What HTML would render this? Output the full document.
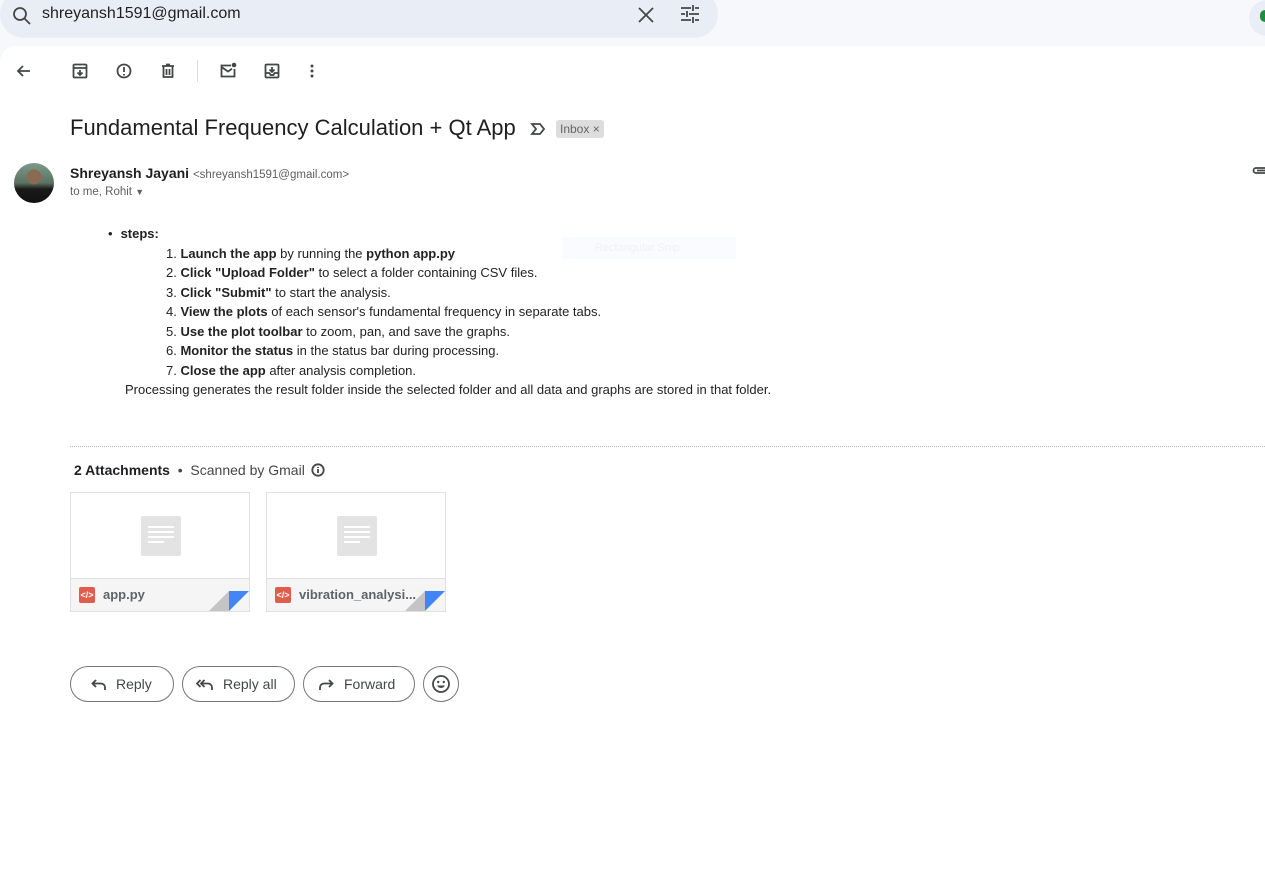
<!DOCTYPE html>
<html><head><meta charset="utf-8"><style>
*{margin:0;padding:0;box-sizing:border-box}
body{width:1265px;height:884px;background:#f6f8fc;font-family:"Liberation Sans",Arial,sans-serif;position:relative;overflow:hidden;color:#202124}
.abs{position:absolute}
.search{left:0;top:-10px;width:718px;height:48px;background:#e9eef6;border-radius:24px}
.panel{left:0;top:46px;width:1265px;height:838px;background:#fff;border-radius:16px 0 0 0}
svg{position:absolute}
.ic{stroke:#444746;fill:none;stroke-width:1.8}
.body{font-size:13px;color:#222;line-height:19.5px}
b{font-weight:bold}
.att{width:180px;height:120px;border:1px solid #e0e0e0;background:#fff}
.att .bot{position:absolute;left:0;top:85px;width:178px;height:33px;background:#f5f5f5;border-top:1px solid #e0e0e0}
.btn{height:36px;border:1px solid #747775;border-radius:18px;font-size:14px;color:#444746;top:666px}
</style></head><body>
<div class="abs search"></div>
<svg style="left:10px;top:4px" width="24" height="24" viewBox="0 0 24 24"><circle cx="10" cy="10" r="6" class="ic" stroke-width="2"/><path d="M14.5 14.5L20 20" class="ic" stroke-width="2.2"/></svg>
<div class="abs" style="left:42px;top:5px;font-size:16px;color:#1f1f1f">shreyansh1591@gmail.com</div>
<svg style="left:636px;top:5px" width="20" height="20" viewBox="0 0 20 20"><path d="M3 3L17 17M17 3L3 17" class="ic" stroke-width="2"/></svg>
<svg style="left:680px;top:4px" width="20" height="20" viewBox="0 0 20 20"><path d="M1 4h10M15 4h4M13 1v6M1 10h4M9 10h10M7 7v6M1 16h10M15 16h4M13 13v6" class="ic" stroke-width="1.8"/></svg>
<div class="abs" style="left:1249px;top:0;width:40px;height:36px;border-radius:18px;background:#e9eef6"></div>
<div class="abs" style="left:1260px;top:10px;width:10px;height:12px;border-radius:6px;background:#1e8e3e"></div>
<div class="abs panel"></div>
<svg style="left:15px;top:62px" width="18" height="18" viewBox="0 0 18 18"><path d="M15 9H3M8 4L3 9l5 5" class="ic" stroke-width="1.6"/></svg>
<svg style="left:71px;top:62px" width="18" height="18" viewBox="0 0 18 18"><rect x="2.5" y="2.5" width="13" height="13" rx="1" class="ic" stroke-width="1.6"/><path d="M2.5 6h13M9 8v5M6.5 10.5L9 13l2.5-2.5" class="ic" stroke-width="1.6"/></svg>
<svg style="left:115px;top:62px" width="18" height="18" viewBox="0 0 18 18"><circle cx="9" cy="9" r="6.5" class="ic" stroke-width="1.6"/><path d="M9 5v5M9 12v1.5" class="ic" stroke-width="1.6"/></svg>
<svg style="left:159px;top:62px" width="18" height="18" viewBox="0 0 18 18"><path d="M3 4h12M7 2.5h4M4.5 4v11h9V4M7.5 7v6M10.5 7v6" class="ic" stroke-width="1.6"/></svg>
<div class="abs" style="left:197px;top:60px;width:1px;height:22px;background:#dadce0"></div>
<svg style="left:219px;top:62px" width="18" height="18" viewBox="0 0 18 18"><path d="M12 3.5H2.5v11h13V7" class="ic" stroke-width="1.6"/><path d="M2.5 5l6.5 4.5 4-2.7" class="ic" stroke-width="1.6"/><circle cx="15" cy="3" r="2.3" fill="#444746"/></svg>
<svg style="left:263px;top:62px" width="18" height="18" viewBox="0 0 18 18"><rect x="2.5" y="2.5" width="13" height="13" rx="1" class="ic" stroke-width="1.6"/><path d="M2.5 11h4l1 2h3l1-2h4M9 5v5M6.5 7.5L9 10l2.5-2.5" class="ic" stroke-width="1.6"/></svg>
<svg style="left:303px;top:62px" width="18" height="18" viewBox="0 0 18 18"><circle cx="9" cy="4" r="1.5" fill="#444746"/><circle cx="9" cy="9" r="1.5" fill="#444746"/><circle cx="9" cy="14" r="1.5" fill="#444746"/></svg>
<div class="abs" style="left:70px;top:115px;font-size:22px;color:#1f1f1f">Fundamental Frequency Calculation + Qt App</div>
<svg style="left:530px;top:121px" width="16" height="16" viewBox="0 0 16 16"><path d="M2 3h8l4 5-4 5H2l4-5z" class="ic" stroke-width="1.3"/></svg>
<div class="abs" style="left:556px;top:120px;height:18px;padding:0 4px;background:#ddd;border-radius:3px;font-size:12px;line-height:18px;color:#666">Inbox ×</div>
<div class="abs" style="left:14px;top:163px;width:40px;height:40px;border-radius:50%;background:radial-gradient(circle at 50% 35%,#8a6a50 0 22%,transparent 23%),linear-gradient(#7f9a8a 0,#5a7262 50%,#1a1a1a 65%,#111 100%)"></div>
<div class="abs" style="left:70px;top:165px;font-size:14px;color:#1f1f1f;font-weight:bold">Shreyansh Jayani <span style="font-weight:normal;font-size:11.5px;color:#5e5e5e">&lt;shreyansh1591@gmail.com&gt;</span></div>
<div class="abs" style="left:70px;top:186px;font-size:11.5px;color:#5e5e5e">to me, Rohit <span style="font-size:9px">▼</span></div>
<svg style="left:1252px;top:165px" width="13" height="12" viewBox="0 0 13 12"><path d="M13 3H4a2.5 2.5 0 000 5h9M13 5.5H5" class="ic" stroke="#777" stroke-width="1.3"/></svg>
<div class="abs" style="left:563px;top:237px;width:173px;height:22px;background:#f9fbff"></div>
<div class="abs" style="left:595px;top:242px;font-size:11px;color:#eef1f6">Rectangular Snip</div>
<div class="abs body" style="left:108px;top:224px">
<div><span style="margin-right:8px">•</span><b>steps:</b></div>
<div style="padding-left:58px">
<div>1. <b>Launch the app</b> by running the <b>python app.py</b></div>
<div>2. <b>Click "Upload Folder"</b> to select a folder containing CSV files.</div>
<div>3. <b>Click "Submit"</b> to start the analysis.</div>
<div>4. <b>View the plots</b> of each sensor's fundamental frequency in separate tabs.</div>
<div>5. <b>Use the plot toolbar</b> to zoom, pan, and save the graphs.</div>
<div>6. <b>Monitor the status</b> in the status bar during processing.</div>
<div>7. <b>Close the app</b> after analysis completion.</div>
</div>
<div style="margin-left:17px">Processing generates the result folder inside the selected folder and all data and graphs are stored in that folder.</div>
</div>
<div class="abs" style="left:70px;top:446px;width:1195px;border-top:1px dotted #bbb"></div>
<div class="abs" style="left:74px;top:462px;font-size:14px;color:#444746"><b style="color:#202124">2 Attachments</b> &nbsp;•&nbsp; Scanned by Gmail</div>
<svg style="left:311px;top:463px" width="14" height="14" viewBox="0 0 14 14"><circle cx="7" cy="7" r="5.7" class="ic" stroke-width="1.2"/><path d="M7 6v4M7 4v1" class="ic" stroke-width="1.3"/></svg>
<div class="abs att" style="left:70px;top:492px"><div class="abs" style="left:70px;top:23px;width:40px;height:40px;background:#e3e3e3;border-radius:2px"></div>
<div class="abs" style="left:77px;top:33px;width:26px;height:2px;background:#fff;box-shadow:0 5px #fff,0 10px #fff"></div><div class="abs" style="left:77px;top:48px;width:16px;height:2px;background:#fff"></div>
<div class="bot"><div class="abs" style="left:8px;top:8px;width:16px;height:16px;background:#e15c4c;border-radius:2px;color:#fff;font-size:9px;line-height:16px;text-align:center;font-weight:bold">&lt;/&gt;</div><div class="abs" style="left:32px;top:8px;font-size:13px;color:#5f6368;font-weight:bold">app.py</div>
<svg style="left:138px;top:12px" width="40" height="20"><path d="M20 0L0 20H20z" fill="#c4c4c4"/><path d="M20 0H40L20 20z" fill="#4285f4"/></svg></div></div>
<div class="abs att" style="left:266px;top:492px"><div class="abs" style="left:70px;top:23px;width:40px;height:40px;background:#e3e3e3;border-radius:2px"></div>
<div class="abs" style="left:77px;top:33px;width:26px;height:2px;background:#fff;box-shadow:0 5px #fff,0 10px #fff"></div><div class="abs" style="left:77px;top:48px;width:16px;height:2px;background:#fff"></div>
<div class="bot"><div class="abs" style="left:8px;top:8px;width:16px;height:16px;background:#e15c4c;border-radius:2px;color:#fff;font-size:9px;line-height:16px;text-align:center;font-weight:bold">&lt;/&gt;</div><div class="abs" style="left:32px;top:8px;font-size:13px;color:#5f6368;font-weight:bold">vibration_analysi...</div>
<svg style="left:138px;top:12px" width="40" height="20"><path d="M20 0L0 20H20z" fill="#c4c4c4"/><path d="M20 0H40L20 20z" fill="#4285f4"/></svg></div></div>
<div class="abs btn" style="left:70px;width:104px"><svg style="left:20px;top:10px" width="16" height="16" viewBox="0 0 16 16"><path d="M5 3L1.5 6.5 5 10M1.5 6.5H10a4 4 0 014 4V13" class="ic" stroke-width="1.5"/></svg><span class="abs" style="left:45px;top:9px">Reply</span></div>
<div class="abs btn" style="left:182px;width:113px"><svg style="left:13px;top:10px" width="18" height="16" viewBox="0 0 18 16"><path d="M4.5 3L1 6.5 4.5 10M8.5 3L5 6.5 8.5 10M5 6.5h7a4 4 0 014 4V13" class="ic" stroke-width="1.5"/></svg><span class="abs" style="left:40px;top:9px">Reply all</span></div>
<div class="abs btn" style="left:303px;width:112px"><svg style="left:14px;top:10px" width="16" height="16" viewBox="0 0 16 16"><path d="M11 3l3.5 3.5L11 10M14.5 6.5H6a4 4 0 00-4 4V13" class="ic" stroke-width="1.5"/></svg><span class="abs" style="left:40px;top:9px">Forward</span></div>
<div class="abs btn" style="left:423px;width:36px"><svg style="left:7px;top:7px" width="20" height="20" viewBox="0 0 20 20"><circle cx="10" cy="10" r="8" class="ic" stroke-width="1.6"/><circle cx="7.2" cy="8" r="1.2" fill="#444746"/><circle cx="12.8" cy="8" r="1.2" fill="#444746"/><path d="M6 11.5a4.5 4.5 0 008 0z" fill="#444746"/></svg></div>
</body></html>
